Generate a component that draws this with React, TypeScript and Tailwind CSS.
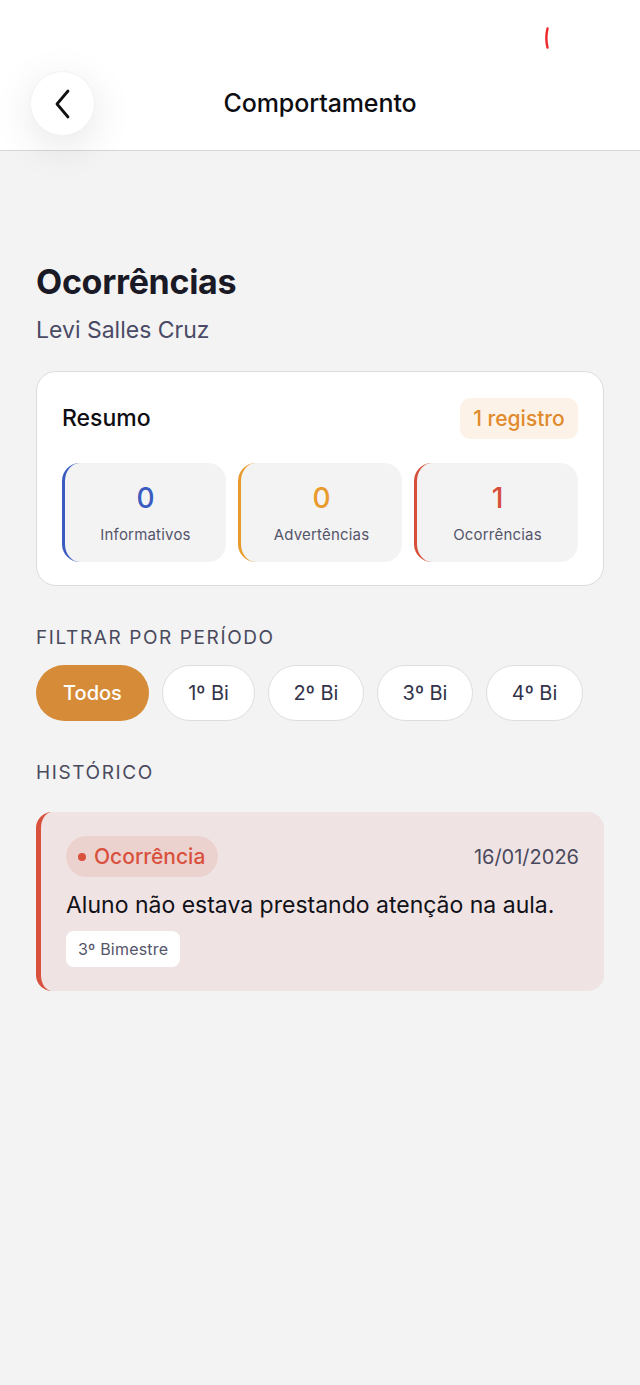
import React from "react";

const font = { fontFamily: "Inter, 'Noto Sans', sans-serif" };

function Stat({ value, label, color, border }: { value: string; label: string; color: string; border: string }) {
  return (
    <div className={`flex h-[99px] flex-col items-center justify-center rounded-[18px] border-l-[3px] bg-[#f3f3f4] ${border}`}>
      <div className={`text-[28px] font-medium leading-[34px] ${color}`}>{value}</div>
      <div className="mt-[10px] text-[15px] leading-[20px] tracking-[0.2px] text-[#55556a]">{label}</div>
    </div>
  );
}

function Pill({ label, active, w }: { label: string; active?: boolean; w: string }) {
  return (
    <div
      className={`flex h-[56px] items-center justify-center rounded-full text-[20px] ${w} ${
        active ? "bg-[#d68b38] font-medium text-white" : "border border-[#dedede] bg-white text-[#33334a]"
      }`}
    >
      {label}
    </div>
  );
}

export default function App() {
  return (
    <div className="min-h-[1385px] w-[640px] bg-[#f3f3f3]" style={font}>
      <header className="relative border-b border-[#d6d6d6] bg-white pb-[15px] pt-[71px]">
        <svg className="absolute left-[544px] top-[27px]" width="6" height="22" viewBox="0 0 6 22">
          <path d="M3.5 1.5 Q1.2 11 3.5 20.5" stroke="#f0262b" strokeWidth="2.4" fill="none" strokeLinecap="round" />
        </svg>
        <div className="grid h-[64px] grid-cols-[1fr_auto_1fr] items-center">
          <div className="pl-[30px]">
            <div className="flex h-[65px] w-[65px] items-center justify-center rounded-full border border-[#f2f2f2] bg-white shadow-[0_10px_40px_rgba(0,0,0,0.10)]">
              <svg width="22" height="30" viewBox="0 0 22 30" fill="none">
                <path d="M16 2 L5 15 L16 28" stroke="#111" strokeWidth="2.8" strokeLinecap="round" strokeLinejoin="round" />
              </svg>
            </div>
          </div>
          <div className="text-[25px] font-medium tracking-[-0.1px] text-[#0d0d12]">Comportamento</div>
          <div />
        </div>
      </header>

      <main className="px-[36px] pt-[111px]">
        <h1 className="text-[34px] font-bold leading-[40px] tracking-[-0.3px] text-[#1a1a26]">Ocorrências</h1>
        <p className="mt-[14px] text-[23px] leading-[28px] text-[#4a4a66]">Levi Salles Cruz</p>

        <section className="mt-[27px] rounded-[20px] border border-[#dcdcdc] bg-white px-[25px] pb-[23px] pt-[26px]">
          <div className="flex items-center justify-between">
            <div className="text-[23px] font-medium text-[#0d0d12]">Resumo</div>
            <div className="flex h-[41px] w-[118px] items-center justify-center rounded-[10px] bg-[#fdf2e7] text-[21px] font-medium text-[#e08a2c]">
              1 registro
            </div>
          </div>
          <div className="mt-[24px] grid grid-cols-3 gap-[12px]">
            <Stat value="0" label="Informativos" color="text-[#3a5bbf]" border="border-[#3a5bbf]" />
            <Stat value="0" label="Advertências" color="text-[#e89a2c]" border="border-[#e89a2c]" />
            <Stat value="1" label="Ocorrências" color="text-[#d64f3a]" border="border-[#d64f3a]" />
          </div>
        </section>

        <div className="mt-[39px] text-[19px] leading-[26px] tracking-[1.6px] text-[#4a4a5e]">FILTRAR POR PERÍODO</div>
        <div className="mt-[14px] flex gap-[13px]">
          <Pill label="Todos" active w="w-[113px]" />
          <Pill label="1º Bi" w="w-[93px]" />
          <Pill label="2º Bi" w="w-[96px]" />
          <Pill label="3º Bi" w="w-[96px]" />
          <Pill label="4º Bi" w="w-[97px]" />
        </div>

        <div className="mt-[39px] text-[19px] leading-[26px] tracking-[1.6px] text-[#4a4a5e]">HISTÓRICO</div>

        <section className="mt-[26px] rounded-[16px] border-l-[5px] border-[#d9513c] bg-[#f0e3e3] pb-[24px] pl-[25px] pr-[25px] pt-[24px]">
          <div className="flex items-center justify-between">
            <div className="flex h-[41px] items-center gap-[8px] rounded-full bg-[#ecd2cf] pl-[12px] pr-[13px] text-[21px] font-medium text-[#d9513c]">
              <span className="h-[8px] w-[8px] rounded-full bg-[#d9513c]" />
              Ocorrência
            </div>
            <div className="text-[20px] text-[#4a4a5e]">16/01/2026</div>
          </div>
          <p className="mt-[13px] text-[23px] leading-[30px] text-[#111118]">Aluno não estava prestando atenção na aula.</p>
          <div className="mt-[11px] inline-flex h-[36px] items-center rounded-[8px] bg-white px-[12px] text-[16px] tracking-[0.2px] text-[#55556a]">
            3º Bimestre
          </div>
        </section>
      </main>
    </div>
  );
}
